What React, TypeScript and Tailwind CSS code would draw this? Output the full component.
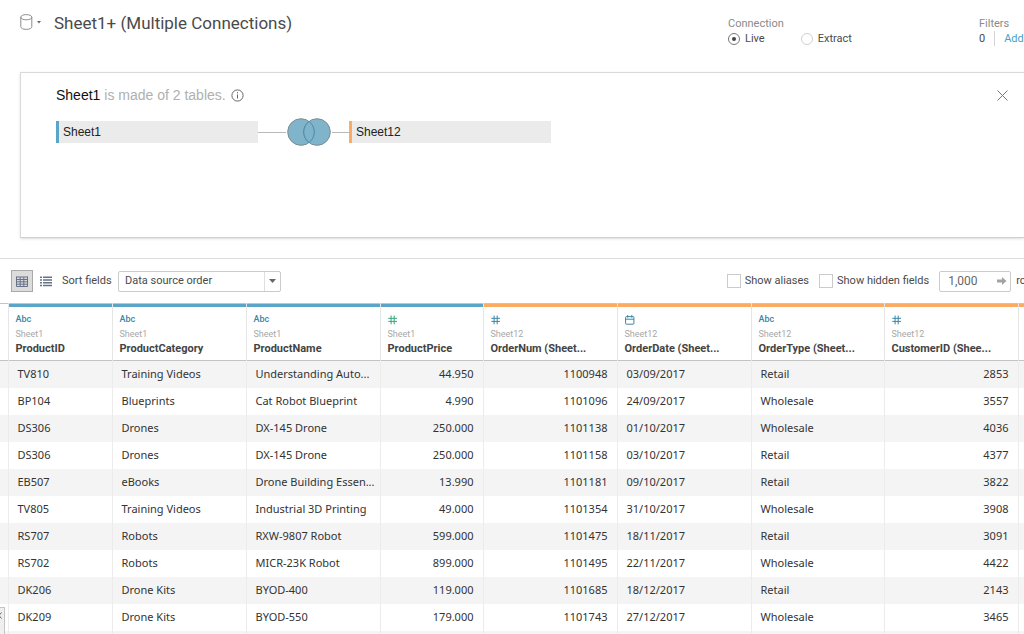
import { ReactNode } from "react";

type Column = {
  name: string;
  source: "Sheet1" | "Sheet12";
  type: "text" | "measure" | "number" | "date";
  width: string;
};

const columns: Column[] = [
  { name: "ProductID", source: "Sheet1", type: "text", width: "w-[104px]" },
  { name: "ProductCategory", source: "Sheet1", type: "text", width: "w-[134px]" },
  { name: "ProductName", source: "Sheet1", type: "text", width: "w-[134px]" },
  { name: "ProductPrice", source: "Sheet1", type: "measure", width: "w-[103px]" },
  { name: "OrderNum (Sheet...", source: "Sheet12", type: "number", width: "w-[134px]" },
  { name: "OrderDate (Sheet...", source: "Sheet12", type: "date", width: "w-[134px]" },
  { name: "OrderType (Sheet...", source: "Sheet12", type: "text", width: "w-[133px]" },
  { name: "CustomerID (Shee...", source: "Sheet12", type: "number", width: "w-[134px]" },
];

const rows = [
  ["TV810", "Training Videos", "Understanding Auto...", "44.950", "1100948", "03/09/2017", "Retail", "2853"],
  ["BP104", "Blueprints", "Cat Robot Blueprint", "4.990", "1101096", "24/09/2017", "Wholesale", "3557"],
  ["DS306", "Drones", "DX-145 Drone", "250.000", "1101138", "01/10/2017", "Wholesale", "4036"],
  ["DS306", "Drones", "DX-145 Drone", "250.000", "1101158", "03/10/2017", "Retail", "4377"],
  ["EB507", "eBooks", "Drone Building Essen...", "13.990", "1101181", "09/10/2017", "Retail", "3822"],
  ["TV805", "Training Videos", "Industrial 3D Printing", "49.000", "1101354", "31/10/2017", "Wholesale", "3908"],
  ["RS707", "Robots", "RXW-9807 Robot", "599.000", "1101475", "18/11/2017", "Retail", "3091"],
  ["RS702", "Robots", "MICR-23K Robot", "899.000", "1101495", "22/11/2017", "Wholesale", "4422"],
  ["DK206", "Drone Kits", "BYOD-400", "119.000", "1101685", "18/12/2017", "Retail", "2143"],
  ["DK209", "Drone Kits", "BYOD-550", "179.000", "1101743", "27/12/2017", "Wholesale", "3465"],
  ["", "", "", "", "", "", "", ""],
];

function TypeIcon({ type }: { type: Column["type"] }) {
  if (type === "text") {
    return <span className="text-[9px] font-medium text-[#3a86a8]">Abc</span>;
  }
  if (type === "date") {
    return (
      <svg width="10" height="10" viewBox="0 0 10 10" fill="none" stroke="#3a86a8">
        <rect x="0.6" y="1.6" width="8.3" height="7.6" rx="0.8" />
        <path d="M0.6 4.2H8.9M2.7 0V2.6M6.8 0V2.6" />
      </svg>
    );
  }
  return (
    <svg width="10" height="10" viewBox="0 0 10 10" fill="none" stroke={type === "measure" ? "#35a67c" : "#3a86a8"}>
      <path d="M3.1 0.5V9.3M6.2 0.5V9.3M0.3 3.3H9M0.3 6.4H9" />
    </svg>
  );
}

function Radio({ label, checked }: { label: string; checked?: boolean }) {
  return (
    <label className="flex items-center gap-[5px]">
      <input
        type="radio"
        name="connection"
        defaultChecked={checked}
        className="flex size-3 appearance-none items-center justify-center rounded-full border border-[#d0d0d0] checked:border-[#777] checked:before:size-1 checked:before:rounded-full checked:before:bg-[#444] checked:before:content-['']"
      />
      {label}
    </label>
  );
}

function Checkbox({ label }: { label: string }) {
  return (
    <label className="flex items-center gap-1">
      <input
        type="checkbox"
        className="size-[14px] appearance-none border border-[#cbcbcb] bg-white checked:bg-[#777]"
      />
      {label}
    </label>
  );
}

function TableChip({ name, className }: { name: string; className: string }) {
  return (
    <div className={`flex h-[22px] w-[202px] items-center border-l-[3px] bg-[#ebebeb] pl-1 text-xs text-[#222] ${className}`}>
      {name}
    </div>
  );
}

function Toggle({ label, active, children }: { label: string; active?: boolean; children: ReactNode }) {
  return (
    <button
      aria-label={label}
      className={`flex size-[22px] items-center justify-center border ${active ? "border-[#a9a9a9] bg-[#dcdcdc]" : "border-transparent"}`}
    >
      {children}
    </button>
  );
}

export default function App() {
  return (
    <div className="relative flex h-screen flex-col overflow-hidden bg-white font-[Roboto,sans-serif] text-[11px] text-[#4a4a4a]">
      <header className="flex h-[72px] shrink-0 items-start pl-[20px]">
        <button aria-label="Data source menu" className="mt-[14px] flex items-center gap-1">
          <svg width="13" height="16" viewBox="0 0 13 16" fill="none" stroke="#8c8c8c">
            <ellipse cx="6.3" cy="3.2" rx="5.5" ry="2.6" />
            <path d="M0.8 3.2V12.6C0.8 14.2 3 15.4 6.3 15.4S11.8 14.2 11.8 12.6V3.2" />
          </svg>
          <svg width="4" height="3" viewBox="0 0 4 3" fill="#666">
            <path d="M0 0H4L2 2.6Z" />
          </svg>
        </button>
        <h1 className="mt-[10px] ml-[13px] text-[17px] leading-[26px]">Sheet1+ (Multiple Connections)</h1>
        <fieldset className="mt-4 ml-auto w-[251px]">
          <legend className="leading-[15px] text-[#8a8a8a]">Connection</legend>
          <div className="flex gap-9 leading-[15px]">
            <Radio label="Live" checked />
            <Radio label="Extract" />
          </div>
        </fieldset>
        <div className="mt-4 w-[45px] leading-[15px]">
          <div className="text-[#8a8a8a]">Filters</div>
          <div className="flex gap-[9px] whitespace-nowrap">
            <span>0</span>
            <a href="#" className="border-l border-[#d4d4d4] pl-[9px] text-[#4a9fc4]">
              Add
            </a>
          </div>
        </div>
      </header>

      <section className="ml-[20px] h-[166px] shrink-0 border border-r-0 border-[#d9d9d9] border-b-[#d0d0d0] pt-3 pl-[35px] shadow-sm font-['Liberation_Sans',sans-serif]">
        <div className="flex items-center pr-4">
          <p className="text-sm leading-[21px] text-[#b0b0b0]">
            <span className="text-[#111]">Sheet1</span> is made of 2 tables.
          </p>
          <svg className="ml-[5px]" width="13" height="13" viewBox="0 0 13 13" fill="none" stroke="#666">
            <circle cx="6.5" cy="6.5" r="5.6" />
            <path d="M6.5 5.5V9.5M6.5 3.2V4.4" />
          </svg>
          <button aria-label="Close" className="ml-auto">
            <svg width="11" height="11" viewBox="0 0 11 11" stroke="#777">
              <path d="M0.5 0.5L10.5 10.5M10.5 0.5L0.5 10.5" />
            </svg>
          </button>
        </div>
        <div className="mt-3 flex items-center">
          <TableChip name="Sheet1" className="border-[#5ba5c8]" />
          <span className="h-px w-7 bg-[#b8b8b8]" />
          <svg width="46" height="28" viewBox="0 0 46 28" stroke="#7b8d94">
            <circle cx="15" cy="14" r="13.3" fill="#7fb4ca" />
            <circle cx="31" cy="14" r="13.3" fill="#7fb4ca" />
            <path d="M23 3.4A13.3 13.3 0 0 1 23 24.6A13.3 13.3 0 0 1 23 3.4Z" fill="#7fb4ca" stroke="#4a8ba8" />
          </svg>
          <span className="h-px w-[17px] bg-[#b8b8b8]" />
          <TableChip name="Sheet12" className="border-[#fbac62]" />
        </div>
      </section>

      <div className="mt-5 flex h-[45px] shrink-0 items-center border-t border-[#dcdcdc] pl-[11px]">
        <Toggle label="Grid view" active>
          <svg width="12" height="11" viewBox="0 0 12 11" fill="none" stroke="#66728a">
            <path d="M0.5 1H11.5M0.5 0.5V10.5H11.5V0.5M0.5 3.5H11.5M0.5 5.8H11.5M0.5 8.2H11.5M4.2 1V10.5M7.8 1V10.5" />
          </svg>
        </Toggle>
        <span className="w-[2px]" />
        <Toggle label="List view">
          <svg width="12" height="11" viewBox="0 0 12 11" stroke="#66728a" strokeWidth="1.5">
            <path d="M0 1.2H2M0 4H2M0 6.8H2M0 9.6H2M3 1.2H12M3 4H12M3 6.8H12M3 9.6H12" />
          </svg>
        </Toggle>
        <label htmlFor="sort" className="ml-[5px] w-14 whitespace-nowrap">
          Sort fields
        </label>
        <div className="relative">
          <select id="sort" className="block h-[21px] w-[163px] appearance-none rounded-xs border border-[#cbcbcb] bg-white pl-[6px]">
            <option>Data source order</option>
          </select>
          <span className="pointer-events-none absolute inset-y-px right-px flex w-4 items-center justify-center border-l border-[#dedede]">
            <svg width="7" height="4" viewBox="0 0 7 4" fill="#666">
              <path d="M0 0H7L3.5 4Z" />
            </svg>
          </span>
        </div>
        <div className="-mr-4 ml-auto flex items-center whitespace-nowrap">
          <Checkbox label="Show aliases" />
          <span className="w-[10px]" />
          <Checkbox label="Show hidden fields" />
          <div className="relative mr-[5px] ml-[10px]">
            <input
              aria-label="Row count"
              defaultValue="1,000"
              className="block h-[21px] w-[72px] rounded-xs border border-[#cbcbcb] pl-2 text-xs text-[#666]"
            />
            <svg className="absolute top-[6px] right-1" width="10" height="8" viewBox="0 0 10 8" fill="#a3a3a3">
              <path d="M0 2.5H5V0L9.5 4L5 8V5.5H0Z" />
            </svg>
          </div>
          <span>rows</span>
        </div>
      </div>

      <table className="w-full shrink-0 table-fixed border-collapse border-t border-[#c4c4c4] whitespace-nowrap">
        <colgroup>
          <col className="w-[8px]" />
          {columns.map((c) => (
            <col key={c.name} className={c.width} />
          ))}
          <col />
        </colgroup>
        <thead>
          <tr className="h-[57px] border-b border-[#c4c4c4] text-left align-top">
            <td className="border-r border-[#e6e6e6] p-0" />
            {columns.map((c) => (
              <th key={c.name} className="border-r border-[#e6e6e6] p-0 font-normal">
                <div className={`h-[3px] ${c.source === "Sheet1" ? "bg-[#5ba5c8]" : "bg-[#fbac62]"}`} />
                <div className="pl-[7px]">
                  <div className="mt-[6px] flex h-[14px] items-center">
                    <TypeIcon type={c.type} />
                  </div>
                  <div className="text-[9px] leading-[14px] text-[#a8a8a8]">{c.source}</div>
                  <div className="text-[11px] leading-[15px] font-bold text-[#444]">{c.name}</div>
                </div>
              </th>
            ))}
            <td className="p-0">
              <div className="h-[3px] bg-[#fbac62]" />
            </td>
          </tr>
        </thead>
        <tbody className="font-['Noto_Sans',sans-serif] text-[11px] text-[#333]">
          {rows.map((row, i) => (
            <tr key={i} className="h-[27px] odd:bg-[#f4f4f4]">
              <td className="border-r border-[#ececec] p-0" />
              {row.map((value, j) => (
                <td
                  key={j}
                  className={`border-r border-[#ececec] px-[9px] py-0 ${
                    columns[j].type === "measure" || columns[j].type === "number" ? "text-right" : ""
                  }`}
                >
                  {value}
                </td>
              ))}
              <td />
            </tr>
          ))}
        </tbody>
      </table>

      <button
        aria-label="Expand pane"
        className="absolute bottom-0 left-0 flex h-[27px] w-[5px] items-start border border-b-0 border-l-0 border-[#c4c4c4] bg-[#efefef] pt-1"
      >
        <svg width="2" height="7" viewBox="0 0 2 7" fill="none" stroke="#666">
          <path d="M1.5 0.5L-1 3.5L1.5 6.5" />
        </svg>
      </button>
    </div>
  );
}
